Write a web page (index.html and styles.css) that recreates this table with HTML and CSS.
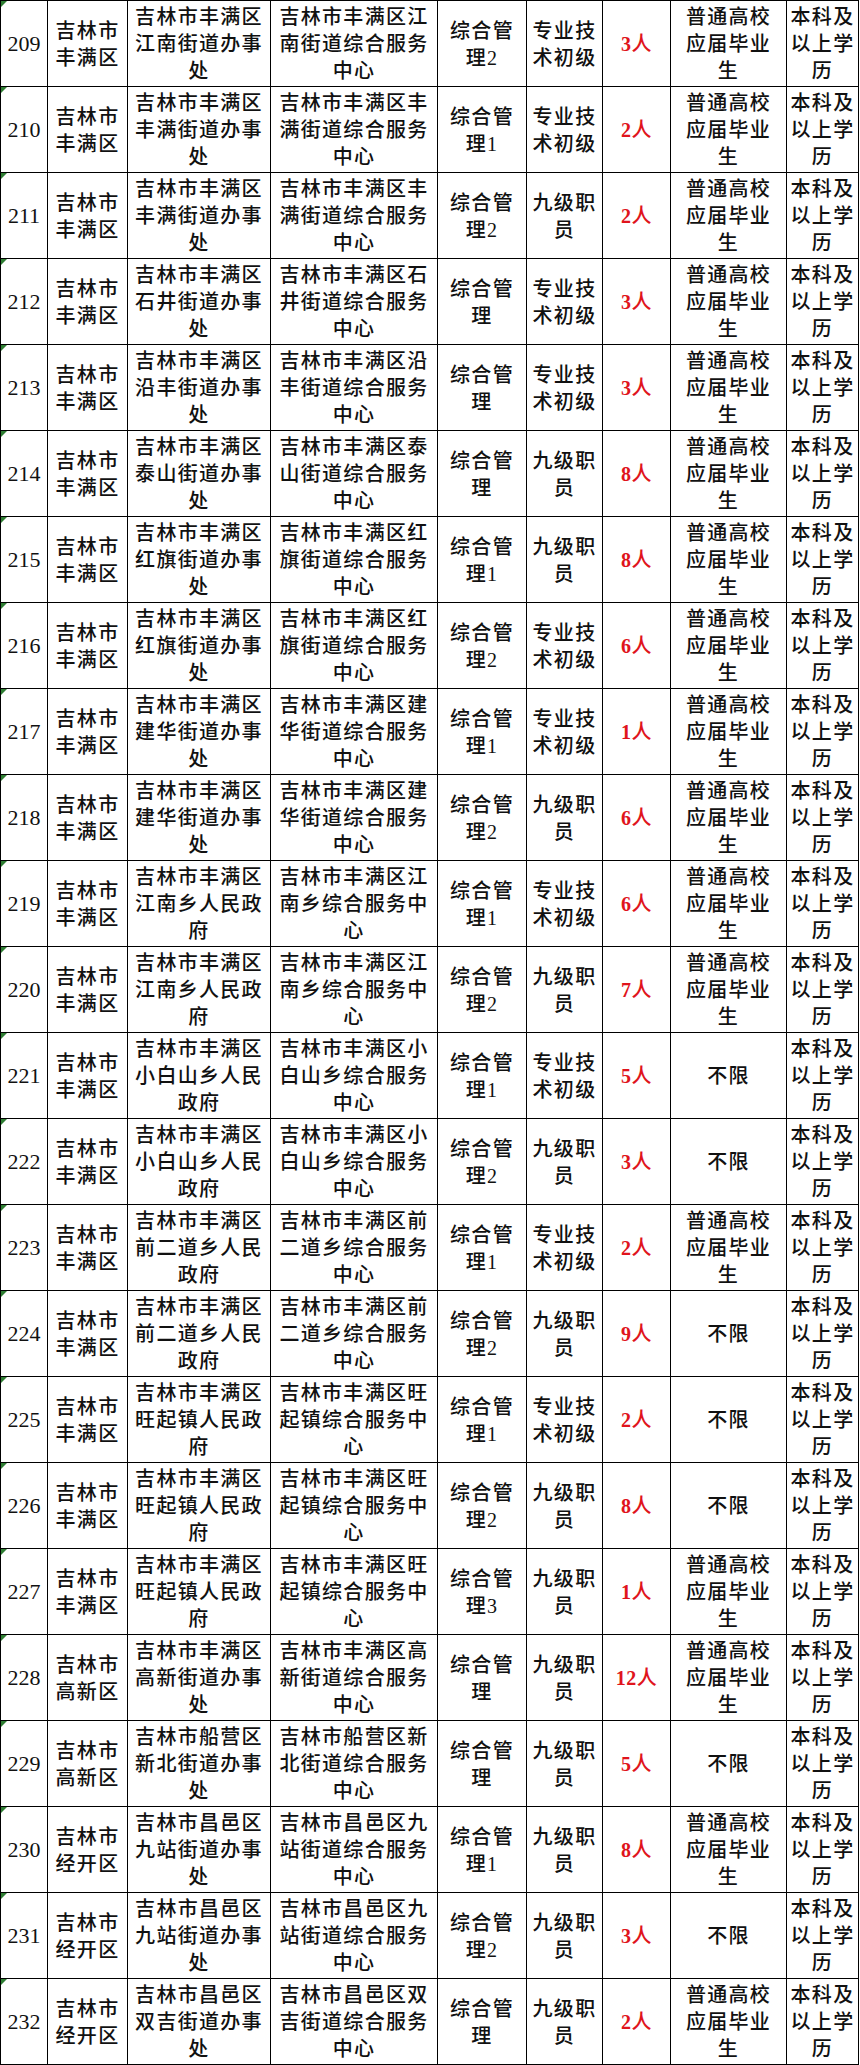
FILE: index.html
```html
<!DOCTYPE html>
<html lang="zh-CN">
<head>
<meta charset="utf-8">
<title>岗位表</title>
<link rel="stylesheet" href="styles.css">
</head>
<body>
<table class="jobs">
<colgroup>
<col class="c1"><col class="c2"><col class="c3"><col class="c4"><col class="c5"><col class="c6"><col class="c7"><col class="c8"><col class="c9">
</colgroup>
<tbody>
<tr><td class="no">209</td><td>吉林市<br>丰满区</td><td>吉林市丰满区<br>江南街道办事<br>处</td><td>吉林市丰满区江<br>南街道综合服务<br>中心</td><td>综合管<br>理2</td><td>专业技<br>术初级</td><td class="num"><b>3</b>人</td><td>普通高校<br>应届毕业<br>生</td><td>本科及<br>以上学<br>历</td></tr>
<tr><td class="no">210</td><td>吉林市<br>丰满区</td><td>吉林市丰满区<br>丰满街道办事<br>处</td><td>吉林市丰满区丰<br>满街道综合服务<br>中心</td><td>综合管<br>理1</td><td>专业技<br>术初级</td><td class="num"><b>2</b>人</td><td>普通高校<br>应届毕业<br>生</td><td>本科及<br>以上学<br>历</td></tr>
<tr><td class="no">211</td><td>吉林市<br>丰满区</td><td>吉林市丰满区<br>丰满街道办事<br>处</td><td>吉林市丰满区丰<br>满街道综合服务<br>中心</td><td>综合管<br>理2</td><td>九级职<br>员</td><td class="num"><b>2</b>人</td><td>普通高校<br>应届毕业<br>生</td><td>本科及<br>以上学<br>历</td></tr>
<tr><td class="no">212</td><td>吉林市<br>丰满区</td><td>吉林市丰满区<br>石井街道办事<br>处</td><td>吉林市丰满区石<br>井街道综合服务<br>中心</td><td>综合管<br>理</td><td>专业技<br>术初级</td><td class="num"><b>3</b>人</td><td>普通高校<br>应届毕业<br>生</td><td>本科及<br>以上学<br>历</td></tr>
<tr><td class="no">213</td><td>吉林市<br>丰满区</td><td>吉林市丰满区<br>沿丰街道办事<br>处</td><td>吉林市丰满区沿<br>丰街道综合服务<br>中心</td><td>综合管<br>理</td><td>专业技<br>术初级</td><td class="num"><b>3</b>人</td><td>普通高校<br>应届毕业<br>生</td><td>本科及<br>以上学<br>历</td></tr>
<tr><td class="no">214</td><td>吉林市<br>丰满区</td><td>吉林市丰满区<br>泰山街道办事<br>处</td><td>吉林市丰满区泰<br>山街道综合服务<br>中心</td><td>综合管<br>理</td><td>九级职<br>员</td><td class="num"><b>8</b>人</td><td>普通高校<br>应届毕业<br>生</td><td>本科及<br>以上学<br>历</td></tr>
<tr><td class="no">215</td><td>吉林市<br>丰满区</td><td>吉林市丰满区<br>红旗街道办事<br>处</td><td>吉林市丰满区红<br>旗街道综合服务<br>中心</td><td>综合管<br>理1</td><td>九级职<br>员</td><td class="num"><b>8</b>人</td><td>普通高校<br>应届毕业<br>生</td><td>本科及<br>以上学<br>历</td></tr>
<tr><td class="no">216</td><td>吉林市<br>丰满区</td><td>吉林市丰满区<br>红旗街道办事<br>处</td><td>吉林市丰满区红<br>旗街道综合服务<br>中心</td><td>综合管<br>理2</td><td>专业技<br>术初级</td><td class="num"><b>6</b>人</td><td>普通高校<br>应届毕业<br>生</td><td>本科及<br>以上学<br>历</td></tr>
<tr><td class="no">217</td><td>吉林市<br>丰满区</td><td>吉林市丰满区<br>建华街道办事<br>处</td><td>吉林市丰满区建<br>华街道综合服务<br>中心</td><td>综合管<br>理1</td><td>专业技<br>术初级</td><td class="num"><b>1</b>人</td><td>普通高校<br>应届毕业<br>生</td><td>本科及<br>以上学<br>历</td></tr>
<tr><td class="no">218</td><td>吉林市<br>丰满区</td><td>吉林市丰满区<br>建华街道办事<br>处</td><td>吉林市丰满区建<br>华街道综合服务<br>中心</td><td>综合管<br>理2</td><td>九级职<br>员</td><td class="num"><b>6</b>人</td><td>普通高校<br>应届毕业<br>生</td><td>本科及<br>以上学<br>历</td></tr>
<tr><td class="no">219</td><td>吉林市<br>丰满区</td><td>吉林市丰满区<br>江南乡人民政<br>府</td><td>吉林市丰满区江<br>南乡综合服务中<br>心</td><td>综合管<br>理1</td><td>专业技<br>术初级</td><td class="num"><b>6</b>人</td><td>普通高校<br>应届毕业<br>生</td><td>本科及<br>以上学<br>历</td></tr>
<tr><td class="no">220</td><td>吉林市<br>丰满区</td><td>吉林市丰满区<br>江南乡人民政<br>府</td><td>吉林市丰满区江<br>南乡综合服务中<br>心</td><td>综合管<br>理2</td><td>九级职<br>员</td><td class="num"><b>7</b>人</td><td>普通高校<br>应届毕业<br>生</td><td>本科及<br>以上学<br>历</td></tr>
<tr><td class="no">221</td><td>吉林市<br>丰满区</td><td>吉林市丰满区<br>小白山乡人民<br>政府</td><td>吉林市丰满区小<br>白山乡综合服务<br>中心</td><td>综合管<br>理1</td><td>专业技<br>术初级</td><td class="num"><b>5</b>人</td><td>不限</td><td>本科及<br>以上学<br>历</td></tr>
<tr><td class="no">222</td><td>吉林市<br>丰满区</td><td>吉林市丰满区<br>小白山乡人民<br>政府</td><td>吉林市丰满区小<br>白山乡综合服务<br>中心</td><td>综合管<br>理2</td><td>九级职<br>员</td><td class="num"><b>3</b>人</td><td>不限</td><td>本科及<br>以上学<br>历</td></tr>
<tr><td class="no">223</td><td>吉林市<br>丰满区</td><td>吉林市丰满区<br>前二道乡人民<br>政府</td><td>吉林市丰满区前<br>二道乡综合服务<br>中心</td><td>综合管<br>理1</td><td>专业技<br>术初级</td><td class="num"><b>2</b>人</td><td>普通高校<br>应届毕业<br>生</td><td>本科及<br>以上学<br>历</td></tr>
<tr><td class="no">224</td><td>吉林市<br>丰满区</td><td>吉林市丰满区<br>前二道乡人民<br>政府</td><td>吉林市丰满区前<br>二道乡综合服务<br>中心</td><td>综合管<br>理2</td><td>九级职<br>员</td><td class="num"><b>9</b>人</td><td>不限</td><td>本科及<br>以上学<br>历</td></tr>
<tr><td class="no">225</td><td>吉林市<br>丰满区</td><td>吉林市丰满区<br>旺起镇人民政<br>府</td><td>吉林市丰满区旺<br>起镇综合服务中<br>心</td><td>综合管<br>理1</td><td>专业技<br>术初级</td><td class="num"><b>2</b>人</td><td>不限</td><td>本科及<br>以上学<br>历</td></tr>
<tr><td class="no">226</td><td>吉林市<br>丰满区</td><td>吉林市丰满区<br>旺起镇人民政<br>府</td><td>吉林市丰满区旺<br>起镇综合服务中<br>心</td><td>综合管<br>理2</td><td>九级职<br>员</td><td class="num"><b>8</b>人</td><td>不限</td><td>本科及<br>以上学<br>历</td></tr>
<tr><td class="no">227</td><td>吉林市<br>丰满区</td><td>吉林市丰满区<br>旺起镇人民政<br>府</td><td>吉林市丰满区旺<br>起镇综合服务中<br>心</td><td>综合管<br>理3</td><td>九级职<br>员</td><td class="num"><b>1</b>人</td><td>普通高校<br>应届毕业<br>生</td><td>本科及<br>以上学<br>历</td></tr>
<tr><td class="no">228</td><td>吉林市<br>高新区</td><td>吉林市丰满区<br>高新街道办事<br>处</td><td>吉林市丰满区高<br>新街道综合服务<br>中心</td><td>综合管<br>理</td><td>九级职<br>员</td><td class="num"><b>12</b>人</td><td>普通高校<br>应届毕业<br>生</td><td>本科及<br>以上学<br>历</td></tr>
<tr><td class="no">229</td><td>吉林市<br>高新区</td><td>吉林市船营区<br>新北街道办事<br>处</td><td>吉林市船营区新<br>北街道综合服务<br>中心</td><td>综合管<br>理</td><td>九级职<br>员</td><td class="num"><b>5</b>人</td><td>不限</td><td>本科及<br>以上学<br>历</td></tr>
<tr><td class="no">230</td><td>吉林市<br>经开区</td><td>吉林市昌邑区<br>九站街道办事<br>处</td><td>吉林市昌邑区九<br>站街道综合服务<br>中心</td><td>综合管<br>理1</td><td>九级职<br>员</td><td class="num"><b>8</b>人</td><td>普通高校<br>应届毕业<br>生</td><td>本科及<br>以上学<br>历</td></tr>
<tr><td class="no">231</td><td>吉林市<br>经开区</td><td>吉林市昌邑区<br>九站街道办事<br>处</td><td>吉林市昌邑区九<br>站街道综合服务<br>中心</td><td>综合管<br>理2</td><td>九级职<br>员</td><td class="num"><b>3</b>人</td><td>不限</td><td>本科及<br>以上学<br>历</td></tr>
<tr><td class="no">232</td><td>吉林市<br>经开区</td><td>吉林市昌邑区<br>双吉街道办事<br>处</td><td>吉林市昌邑区双<br>吉街道综合服务<br>中心</td><td>综合管<br>理</td><td>九级职<br>员</td><td class="num"><b>2</b>人</td><td>普通高校<br>应届毕业<br>生</td><td>本科及<br>以上学<br>历</td></tr>
</tbody>
</table>
</body>
</html>
```

FILE: styles.css
```css
html, body {
  margin: 0;
  padding: 0;
  background: #ffffff;
}

.jobs {
  border-collapse: collapse;
  table-layout: fixed;
  width: 859px;
  font-family: "Liberation Serif", "Noto Sans CJK SC", serif;
  font-size: 20px;
  font-weight: 500;
  color: #111111;
}

.c1 { width: 47px; }
.c2 { width: 80px; }
.c3 { width: 143px; }
.c4 { width: 167px; }
.c5 { width: 89px; }
.c6 { width: 76px; }
.c7 { width: 68px; }
.c8 { width: 116px; }
.c9 { width: 72px; }

.jobs td {
  border: 1px solid #000000;
  height: 86px;
  padding: 2px 0 0;
  box-sizing: border-box;
  text-align: center;
  vertical-align: middle;
  line-height: 26.7px;
  letter-spacing: 1.3px;
  white-space: nowrap;
  overflow: hidden;
}

.jobs td.no {
  position: relative;
  font-size: 22px;
  letter-spacing: 0;
}

.jobs td.no::before {
  content: "";
  position: absolute;
  left: 0;
  top: 0;
  width: 0;
  height: 0;
  border-top: 6px solid #2e7d32;
  border-right: 6px solid transparent;
}

.jobs td.num {
  color: #e0141c;
  letter-spacing: 0.5px;
}

.jobs td.num b {
  font-weight: 700;
}
```
